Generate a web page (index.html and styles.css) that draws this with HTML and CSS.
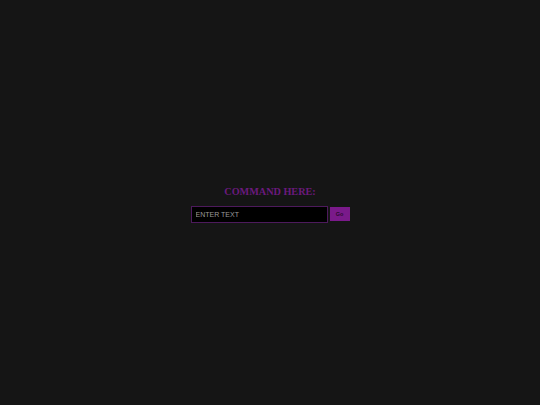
FILE: index.html
```html
<!DOCTYPE html>
<html>
<head>
<meta charset="utf-8">
<link rel="stylesheet" href="styles.css">
</head>
<body>
<div class="wrap">
  <div class="box">
    <h1 class="title">COMMAND HERE:</h1>
    <form class="row">
      <input class="cmd" type="text" placeholder="ENTER TEXT">
      <button class="go" type="button">Go</button>
    </form>
  </div>
</div>
</body>
</html>
```
FILE: styles.css
```css
html, body {
  margin: 0;
  padding: 0;
  background: #151515;
  width: 540px;
  height: 405px;
  overflow: hidden;
}
.wrap {
  height: 405px;
  display: flex;
  align-items: center;
  justify-content: center;
}
.box {
  display: flex;
  flex-direction: column;
  align-items: center;
  margin-top: 2px;
}
.title {
  margin: 0 0 8px 0;
  font-family: "Liberation Serif", serif;
  font-weight: bold;
  font-size: 10.2px;
  color: #6b1a7d;
  line-height: 13px;
}
.row {
  display: flex;
  align-items: center;
  gap: 2px;
  margin: 0;
}
.cmd {
  box-sizing: border-box;
  width: 137px;
  height: 17px;
  background: #000;
  border: 1px solid #4d1a5c;
  color: #ccc;
  font-family: "Liberation Sans", sans-serif;
  font-size: 7px;
  padding: 0 4px;
  outline: none;
}
.cmd::placeholder {
  color: #9a9a9a;
}
.go {
  box-sizing: border-box;
  width: 20px;
  height: 14px;
  background: #7a1a8a;
  border: none;
  color: #2a0a30;
  font-family: "Liberation Sans", sans-serif;
  font-size: 5.5px;
  font-weight: bold;
  padding: 0;
}
```
